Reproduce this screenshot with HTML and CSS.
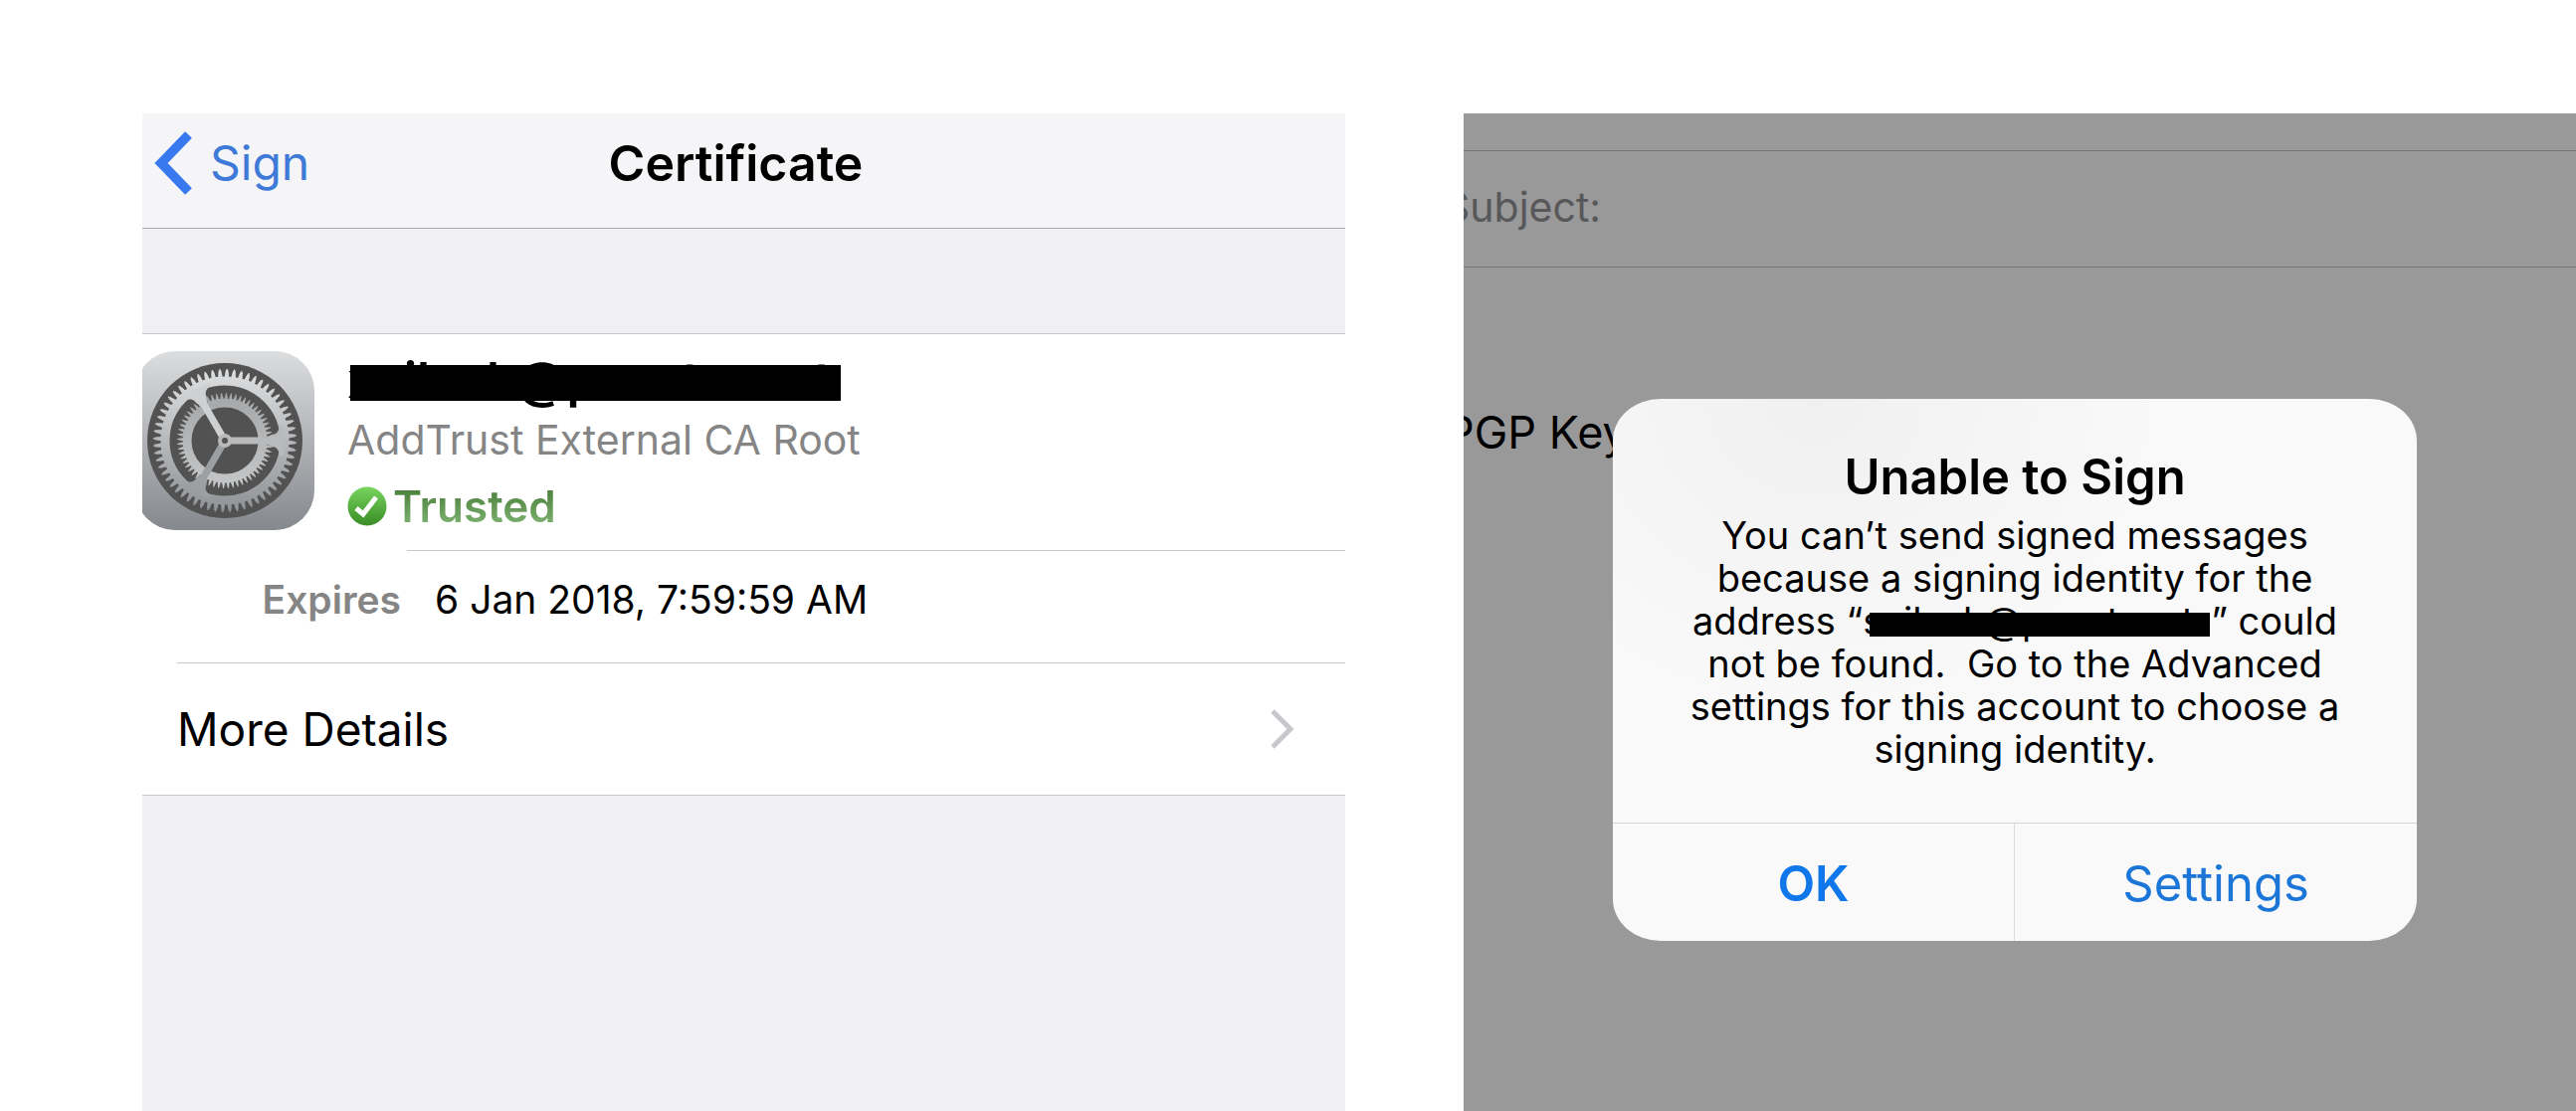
FILE: index.html
```html
<!DOCTYPE html>
<html lang="en">
<head>
    <meta charset="utf-8">
    <title>Certificate</title>
    <link rel="stylesheet" href="styles.css">
</head>
<body>

<section class="screen certificate">
    <header class="navbar">
        <a class="back" href="#">
            <svg class="back-icon" viewBox="0 0 38 64" aria-hidden="true">
                <path d="M34.500 3.500 L7 32 L34.500 60.500" fill="none" stroke="#3879f0" stroke-width="9.500"/>
            </svg>
            Sign
        </a>
        <h1>Certificate</h1>
    </header>

    <div class="group">
        <div class="summary">
            <svg class="app-icon" viewBox="7 0 173 180" aria-hidden="true">
                <defs>
                    <linearGradient id="plate" x1="0" y1="0" x2="0" y2="1">
                        <stop offset="0" stop-color="#dcdddf"/>
                        <stop offset="1" stop-color="#85888d"/>
                    </linearGradient>
                    <linearGradient id="metal" gradientUnits="userSpaceOnUse" x1="0" y1="-72" x2="0" y2="72">
                        <stop offset="0" stop-color="#dedfe0"/>
                        <stop offset="1" stop-color="#8f9296"/>
                    </linearGradient>
                    <linearGradient id="metalInner" gradientUnits="userSpaceOnUse" x1="0" y1="-48" x2="0" y2="48">
                        <stop offset="0" stop-color="#a5a6a8"/>
                        <stop offset="1" stop-color="#c6c7c9"/>
                    </linearGradient>
                </defs>
                <rect width="180" height="180" rx="40" fill="url(#plate)"/>
                <g transform="translate(90 90)" fill="none">
                    <circle r="78" fill="#525252"/>
                    <!-- inner gear, 60 teeth -->
                    <g stroke="url(#metalInner)">
                        <circle r="38" stroke-width="9"/>
                        <circle r="43" stroke-width="3" pathLength="600" stroke-dasharray="6 4"/>
                        <circle r="45" stroke-width="3" pathLength="600" stroke-dasharray="4 6" stroke-dashoffset="-1"/>
                        <circle r="47" stroke-width="2" pathLength="600" stroke-dasharray="2 8" stroke-dashoffset="-2"/>
                    </g>
                    <!-- outer gear, 60 teeth -->
                    <g stroke="url(#metal)">
                        <circle r="60" stroke-width="9"/>
                        <circle r="65" stroke-width="3" pathLength="600" stroke-dasharray="6 4"/>
                        <circle r="67" stroke-width="3" pathLength="600" stroke-dasharray="5 5" stroke-dashoffset="-0.5"/>
                        <circle r="69" stroke-width="3" pathLength="600" stroke-dasharray="4 6" stroke-dashoffset="-1"/>
                        <circle r="71" stroke-width="2" pathLength="600" stroke-dasharray="2 8" stroke-dashoffset="-2"/>
                    </g>
                    <!-- spokes with their flared ends -->
                    <g fill="#b9babc">
                        <path d="M0 -3.500 H42 L47 -6 Q54 -6 55 -15 L59 -15 V15 L55 15 Q54 6 47 6 L42 3.500 H0 Z"/>
                        <path transform="rotate(120)" fill="#9da0a3" d="M0 -3.500 H42 L47 -6 Q54 -6 55 -15 L59 -15 V15 L55 15 Q54 6 47 6 L42 3.500 H0 Z"/>
                        <path transform="rotate(240)" fill="#cfd0d2" d="M0 -3.500 H42 L47 -6 Q54 -6 55 -15 L59 -15 V15 L55 15 Q54 6 47 6 L42 3.500 H0 Z"/>
                        <circle r="7"/>
                    </g>
                    <circle r="3" fill="#525252"/>
                </g>
            </svg>
            <div class="identity">
                <h2 class="redacted"><span aria-hidden="true">xxilxxh@pxxxtxxxxt</span></h2>
                <p class="issuer">AddTrust External CA Root</p>
                <p class="trust">
                    <svg class="trust-icon" viewBox="0 0 40 40" aria-hidden="true">
                        <defs>
                            <linearGradient id="green" x1="0" y1="0" x2="0" y2="1">
                                <stop offset="0" stop-color="#78d45f"/>
                                <stop offset="1" stop-color="#3a8c24"/>
                            </linearGradient>
                        </defs>
                        <circle cx="20" cy="20" r="19.500" fill="url(#green)"/>
                        <path d="M9 22 L16 28 L29 11" fill="none" stroke="#fff" stroke-width="5"/>
                    </svg>
                    <span>Trusted</span>
                </p>
            </div>
        </div>
        <dl class="expires">
            <dt>Expires</dt>
            <dd>6 Jan 2018, 7:59:59 AM</dd>
        </dl>
        <a class="more" href="#">
            More Details
            <svg class="more-icon" viewBox="0 0 24 40" aria-hidden="true">
                <path d="M3 2 L21 20 L3 38" fill="none" stroke="#c7c7cc" stroke-width="5"/>
            </svg>
        </a>
    </div>
</section>

<section class="screen mail">
    <form class="compose">
        <div class="subject">
            <label for="subject">Subject:</label>
            <input type="text" id="subject" name="subject">
        </div>
        <textarea class="message" aria-label="Message">PGP Key</textarea>
    </form>

    <div class="overlay">
        <div class="alert" role="alertdialog" aria-labelledby="alertTitle">
            <div class="alert-text">
                <h2 id="alertTitle">Unable to Sign</h2>
                <p>
                    You can’t send signed messages<br>
                    because a signing identity for the<br>
                    address “<span class="redacted-inline">sxilxxh@pxxxtxxxt</span>” could<br>
                    not be found.&nbsp; Go to the Advanced<br>
                    settings for this account to choose a<br>
                    signing identity.
                </p>
            </div>
            <div class="alert-buttons">
                <button type="button" class="primary">OK</button>
                <button type="button">Settings</button>
            </div>
        </div>
    </div>
</section>

</body>
</html>
```

FILE: styles.css
```css
* {
    box-sizing: border-box;
}

body {
    display: grid;
    grid-template-columns: 1209fr 1118fr;
    gap: 119px;
    min-height: 100vh;
    margin: 0;
    padding: 114px 0 0 143px;
    background: #fff;
    color: #000;
    font-family: Inter, "Liberation Sans", sans-serif;
}

h1, h2, p, dl, dd {
    margin: 0;
}

a {
    color: inherit;
    text-decoration: none;
}

.screen {
    position: relative;
    overflow: hidden;
}

/* certificate screen */

.certificate {
    background: #efeff4;
}

.navbar {
    display: grid;
    grid-template-columns: 1fr auto 1fr;
    align-items: center;
    padding: 16px 28px 31px 12px;
    border-bottom: 1px solid #a9a9b0;
    background: #f5f5f7;
}

.navbar h1 {
    font-size: 50px;
    font-weight: 600;
    line-height: 68px;
}

.back {
    display: flex;
    align-items: center;
    gap: 18px;
    color: #3f7ad8;
    font-size: 48px;
    line-height: 68px;
}

.back-icon {
    width: 38px;
    height: 64px;
}

.group {
    margin-top: 105px;
    border-top: 1px solid #c8c7cc;
    border-bottom: 1px solid #c8c7cc;
    background: #fff;
}

.summary {
    display: flex;
    gap: 33px;
    padding: 17px 0 8px;
}

.app-icon {
    width: 173px;
    height: 180px;
}

.identity {
    display: flex;
    flex-direction: column;
    gap: 4px;
}

.redacted {
    position: relative;
    width: 496px;
    font-size: 50px;
    font-weight: 600;
    line-height: 58px;
    white-space: nowrap;
}

.redacted::after {
    content: "";
    position: absolute;
    top: 14px;
    left: 3px;
    width: 493px;
    height: 36px;
    background: #000;
}

.issuer {
    color: #858585;
    font-size: 41px;
    line-height: 54px;
}

.trust {
    display: flex;
    align-items: center;
    gap: 6px;
    font-size: 44px;
    font-weight: 600;
    line-height: 72px;
}

.trust span {
    background: linear-gradient(#4f8340 30%, #7bb06e 75%);
    background-clip: text;
    color: transparent;
}

.trust-icon {
    width: 40px;
    height: 40px;
}

.expires {
    display: grid;
    grid-template-columns: 260px 1fr;
    gap: 34px;
    font-size: 39px;
    line-height: 100px;
    padding-bottom: 13px;
    background: linear-gradient(#c8c8c8, #c8c8c8) 266px 0 / 100% 1px no-repeat;
}

.expires dt {
    color: #858585;
    font-weight: 600;
    text-align: right;
}

.more {
    display: flex;
    align-items: center;
    justify-content: space-between;
    margin-left: 35px;
    padding-right: 52px;
    border-top: 1px solid #c8c7cc;
    font-size: 46px;
    line-height: 132px;
}

.more-icon {
    width: 24px;
    height: 40px;
}

/* mail screen, dimmed behind the alert */

.mail {
    background: #999;
}

.compose {
    display: flex;
    flex-direction: column;
    padding-top: 37px;
}

.subject {
    display: flex;
    align-items: center;
    padding: 0 20px 4px 0;
    border-top: 1px solid #757577;
    border-bottom: 1px solid #757577;
    line-height: 112px;
}

.subject label {
    margin-left: -20px;
    color: #58585a;
    font-size: 41px;
}

.subject input,
.message {
    flex: 1;
    padding: 0;
    border: none;
    outline: none;
    background: none;
    color: #000;
    font: inherit;
    font-size: 45px;
}

.message {
    height: 200px;
    margin-left: -18px;
    padding-top: 136px;
    line-height: 60px;
    resize: none;
    overflow: hidden;
}

.overlay {
    position: absolute;
    inset: 0;
    padding: 287px 160px 0 150px;
}

.alert {
    overflow: hidden;
    border-radius: 48px / 42px;
    background: radial-gradient(ellipse at 25% 0, #f0f0f0, #f9f9f9 40%);
    text-align: center;
}

.alert-text {
    padding: 45px 20px 52px;
}

.alert h2 {
    margin-bottom: 3px;
    font-size: 49px;
    font-weight: 600;
    line-height: 68px;
}

.alert p {
    font-size: 38px;
    line-height: 43px;
}

.redacted-inline {
    position: relative;
    display: inline-block;
    width: 350px;
    height: 43px;
    text-align: left;
    vertical-align: top;
    white-space: nowrap;
}

.redacted-inline::after {
    content: "";
    position: absolute;
    top: 13px;
    left: 7px;
    width: 342px;
    height: 24px;
    background: #000;
}

.alert-buttons {
    display: grid;
    grid-template-columns: 1fr 1fr;
    border-top: 1px solid #d5d5d5;
}

.alert-buttons button {
    padding: 4px 0 0;
    border: none;
    background: none;
    color: #1b76d8;
    font: inherit;
    font-size: 49px;
    line-height: 114px;
    cursor: pointer;
}

.alert-buttons .primary {
    border-right: 1px solid #dcdcdc;
    color: #0f77ea;
    font-weight: 600;
}
```
